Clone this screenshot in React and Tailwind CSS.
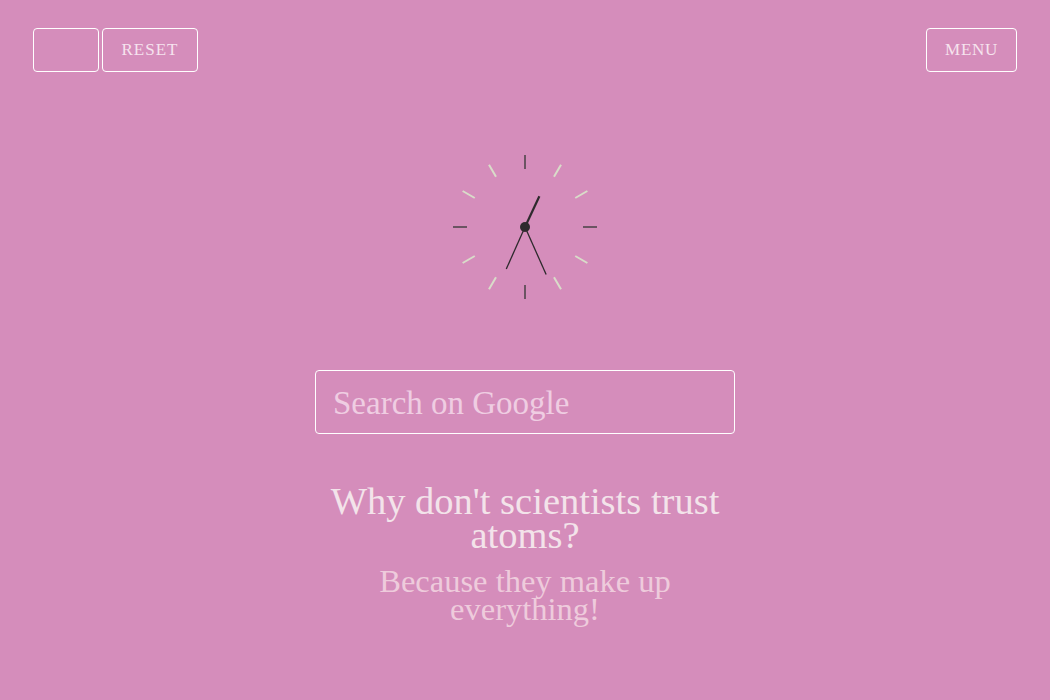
import React from "react";

const ticks = Array.from({ length: 12 }, (_, i) => i);

function Clock() {
  const cx = 80;
  const cy = 80;
  const hand = (deg, len) => {
    const r = (deg * Math.PI) / 180;
    return { x2: cx + Math.sin(r) * len, y2: cy - Math.cos(r) * len };
  };
  return (
    <svg width="160" height="160" viewBox="0 0 160 160">
      {ticks.map((i) => {
        const a = (i * 30 * Math.PI) / 180;
        const major = i % 3 === 0;
        return (
          <line
            key={i}
            x1={cx + Math.sin(a) * 58}
            y1={cy - Math.cos(a) * 58}
            x2={cx + Math.sin(a) * 72}
            y2={cy - Math.cos(a) * 72}
            stroke={major ? "#6b5462" : "#d9dcc9"}
            strokeWidth="2"
          />
        );
      })}
      <line x1={cx} y1={cy} {...hand(25, 34)} stroke="#2e2a2d" strokeWidth="2.2" />
      <line x1={cx} y1={cy} {...hand(156, 52)} stroke="#2e2a2d" strokeWidth="1.3" />
      <line x1={cx} y1={cy} {...hand(204, 46)} stroke="#2e2a2d" strokeWidth="1.3" />
      <circle cx={cx} cy={cy} r="5" fill="#2e2a2d" />
    </svg>
  );
}

export default function App() {
  return (
    <div
      className="min-h-[700px] w-full bg-[#d58dbb] flex flex-col items-center"
      style={{ fontFamily: '"Liberation Serif", serif' }}
    >
      <div className="w-full flex justify-between px-[33px] pt-[28px]">
        <div className="flex gap-[3px]">
          <button className="w-[66px] h-[44px] border border-white rounded-[4px]" />
          <button className="w-[96px] h-[44px] border border-white rounded-[4px] text-[17px] text-[#f6e3ee] tracking-[0.06em]">
            RESET
          </button>
        </div>
        <button className="w-[91px] h-[44px] border border-white rounded-[4px] text-[17px] text-[#f6e3ee] tracking-[0.04em]">
          MENU
        </button>
      </div>

      <div className="mt-[75px]">
        <Clock />
      </div>

      <div className="mt-[63px] w-[420px] h-[64px] border border-white rounded-[4px] flex items-center px-[17px] pt-[3px]">
        <span className="text-[33px] text-[#efcde2]">Search on Google</span>
      </div>

      <div className="mt-[50px] w-[420px] text-center">
        <h1 className="text-[38.5px] leading-[34px] text-[#f3e3ea]">
          Why don't scientists trust atoms?
        </h1>
        <p className="mt-[15px] text-[32.5px] leading-[28px] text-[#eecbdc]">
          Because they make up everything!
        </p>
      </div>
    </div>
  );
}
